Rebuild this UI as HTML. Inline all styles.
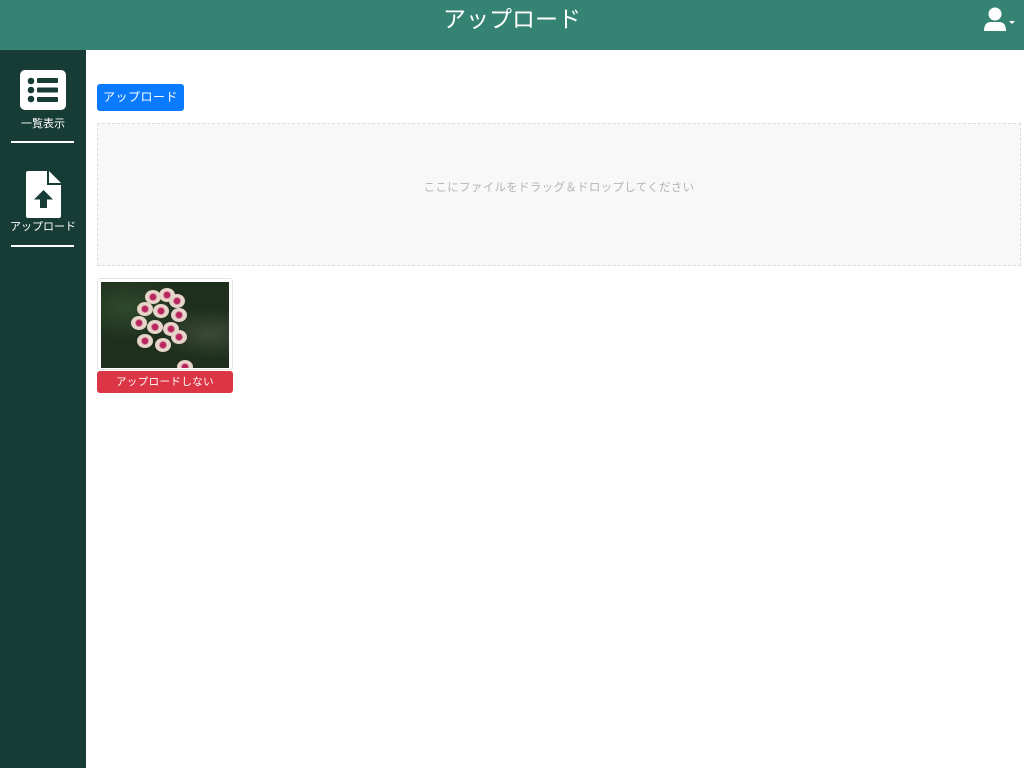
<!DOCTYPE html>
<html><head><meta charset="utf-8"><style>
body{margin:0;width:1024px;height:768px;overflow:hidden;font-family:"Liberation Sans","Noto Sans CJK JP",sans-serif;background:#fff;position:relative}
.hdr{position:absolute;left:0;top:0;width:1024px;height:50px;background:#358372;color:#fff;font-size:23px;text-align:center;line-height:38px}
.side{position:absolute;left:0;top:50px;width:86px;height:718px;background:#173b35;color:#fff}
.lbl{position:absolute;width:86px;text-align:center;font-size:11px}
.hr{position:absolute;left:11px;width:63px;height:2px;background:#fff}
.btn{position:absolute;left:97px;top:84px;width:87px;height:27px;background:#0a7bff;color:#fff;font-size:12px;text-align:center;line-height:27px;border-radius:3px;letter-spacing:0.5px}
.drop{position:absolute;left:97px;top:123px;width:922px;height:141px;border:1px dashed #ddd;background:#f8f8f8;color:#b4b4b4;font-size:11.5px;text-align:center;line-height:128px;letter-spacing:0.3px}
.thumb{position:absolute;left:97px;top:278px;width:134px;height:90px;border:1px solid #e4e4e4;border-radius:3px;background:#fff}
.img{position:absolute;left:3px;top:3px;width:128px;height:86px;overflow:hidden;background:radial-gradient(ellipse at 20% 30%,#2f4a2c 0,transparent 40%),radial-gradient(ellipse at 85% 60%,#3a4a35 0,transparent 35%),#1e2f1d}
.f{position:absolute;width:16px;height:14px;border-radius:50%;background:radial-gradient(circle,#b8245e 0 25%,#e9d8cc 40%,#dccbbd 100%)}
.del{position:absolute;left:97px;top:371px;width:136px;height:22px;background:#dc3545;color:#fff;font-size:10.5px;text-align:center;line-height:22px;border-radius:3px;letter-spacing:0.4px}
</style></head><body>
<div class="hdr">アップロード
<svg style="position:absolute;left:982px;top:7px" width="36" height="26" viewBox="0 0 36 26"><circle cx="13" cy="7" r="6.5" fill="#fff"/><path d="M2 24 Q2 15 9 15 L17 15 Q24 15 24 24 Z" fill="#fff"/><path d="M27 14 L33 14 L30 17Z" fill="#fff"/></svg></div>
<div class="side">
<svg style="position:absolute;left:20px;top:20px" width="46" height="40" viewBox="0 0 46 40"><rect width="46" height="40" rx="5" fill="#fff"/><g fill="#173b35"><circle cx="11" cy="11" r="3.3"/><circle cx="11" cy="20" r="3.3"/><circle cx="11" cy="29" r="3.3"/><rect x="17" y="8" width="21" height="5" rx="1"/><rect x="17" y="17.5" width="21" height="5" rx="1"/><rect x="17" y="27" width="21" height="5" rx="1"/></g></svg>
<div class="lbl" style="top:65px">一覧表示</div>
<div class="hr" style="top:91px"></div>
<svg style="position:absolute;left:26px;top:121px" width="35" height="47" viewBox="0 0 35 47"><path d="M0 2 Q0 0 2 0 L21 0 L21 14 L35 14 L35 45 Q35 47 33 47 L2 47 Q0 47 0 45Z M23 0 L35 12 L23 12Z" fill="#fff"/><path d="M17.5 19 L27 28.5 L21 28.5 L21 37 L14 37 L14 28.5 L8 28.5Z" fill="#173b35"/></svg>
<div class="lbl" style="top:168px">アップロード</div>
<div class="hr" style="top:195px"></div>
</div>
<div class="btn">アップロード</div>
<div class="drop">ここにファイルをドラッグ＆ドロップしてください</div>
<div class="thumb"><div class="img">
<div class="f" style="left:44px;top:8px"></div><div class="f" style="left:58px;top:6px"></div><div class="f" style="left:68px;top:12px"></div>
<div class="f" style="left:36px;top:20px"></div><div class="f" style="left:52px;top:22px"></div><div class="f" style="left:70px;top:26px"></div>
<div class="f" style="left:30px;top:34px"></div><div class="f" style="left:46px;top:38px"></div><div class="f" style="left:62px;top:40px"></div>
<div class="f" style="left:36px;top:52px"></div><div class="f" style="left:54px;top:56px"></div><div class="f" style="left:70px;top:48px"></div>
<div class="f" style="left:76px;top:78px"></div>
</div></div>
<div class="del">アップロードしない</div>
</body></html>
